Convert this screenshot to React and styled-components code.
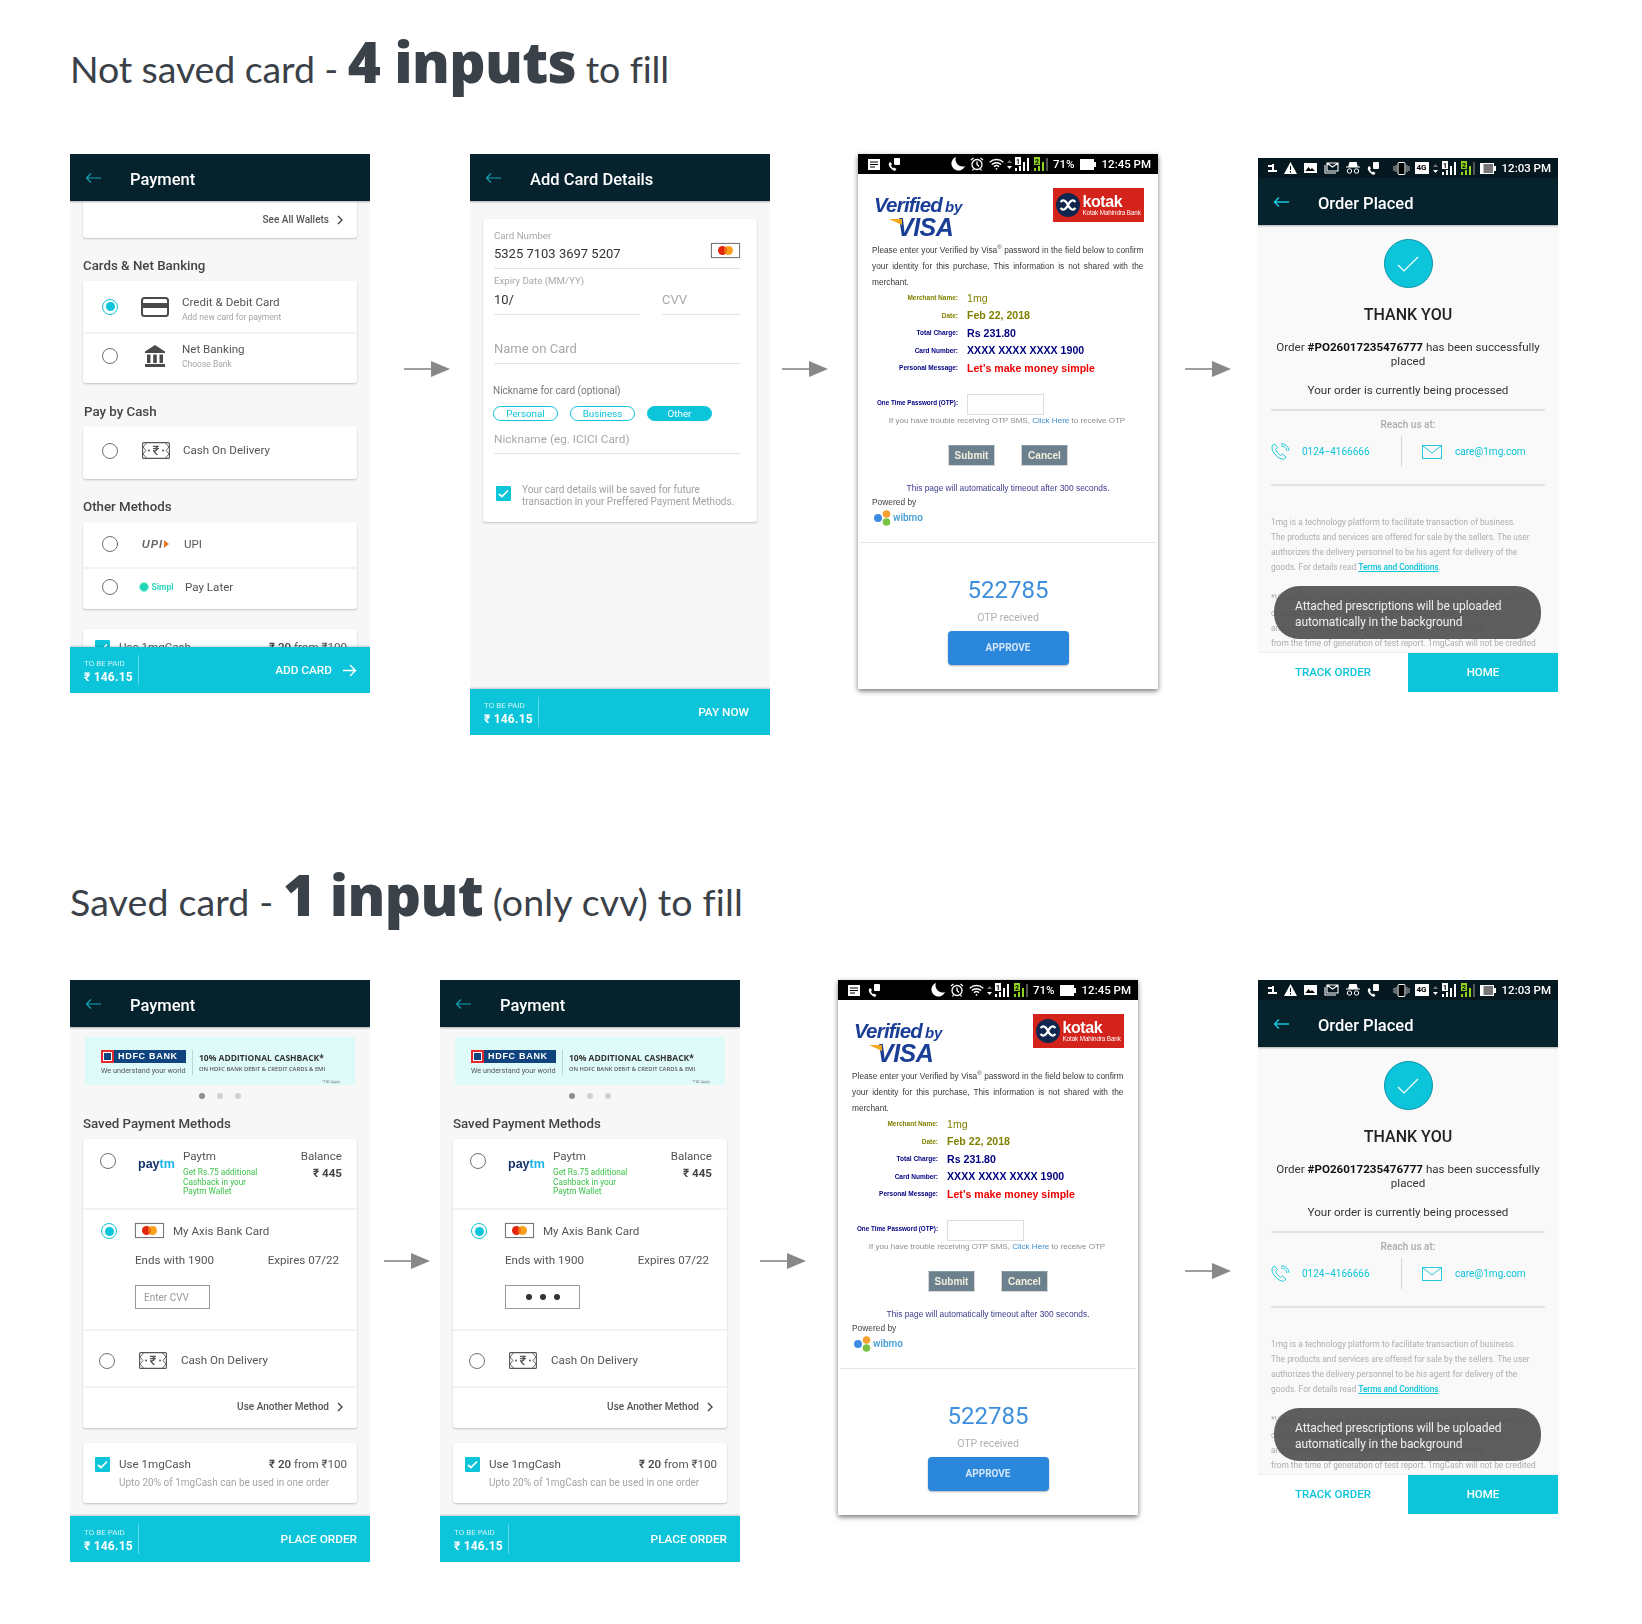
import React from "react";
import styled, { createGlobalStyle } from "styled-components";

const GlobalStyle = createGlobalStyle`
  html, body { margin: 0; padding: 0; background: #fff; }
  body { font-family: Roboto, "Liberation Sans", sans-serif; color: #444; }
`;

const CYAN = "#0cc5da";
const DARK = "#05222d";

const Page = styled.div`
  width: 1642px;
  height: 1624px;
  overflow: hidden;
  padding-left: 70px;
  box-sizing: border-box;
`;
const Section = styled.section`
  height: ${(p) => p.$h}px;
`;
const Heading = styled.h1`
  height: 154px;
  box-sizing: border-box;
  margin: 0;
  padding-top: ${(p) => p.$pt}px;
  font-family: Lato, "Open Sans", sans-serif;
  font-weight: 400;
  font-size: 37.5px;
  line-height: 60px;
  letter-spacing: ${(p) => p.$ls}px;
  color: #3a4148;
  white-space: nowrap;
  b {
    font-family: "Open Sans", sans-serif;
    font-weight: 800;
    font-size: 56.5px;
    letter-spacing: -0.6px;
  }
`;
const Row = styled.div`
  display: flex;
  align-items: flex-start;
`;
const FlowArrow = styled.svg`
  flex: none;
  width: 46px;
  height: 16px;
  margin: ${(p) => p.$mt}px ${(p) => p.$mr}px 0 ${(p) => p.$ml}px;
`;
const Screen = styled.div`
  position: relative;
  flex: none;
  width: 300px;
  height: ${(p) => p.$h}px;
  margin-top: ${(p) => p.$mt || 0}px;
  display: flex;
  flex-direction: column;
  overflow: hidden;
  background: ${(p) => p.$bg || "#f7f7f7"};
  filter: blur(0.35px);
`;
const BankScreen = styled(Screen)`
  overflow: visible;
  box-shadow: 0 2px 5px rgba(0, 0, 0, 0.55);
  font-family: "Liberation Sans", Arial, sans-serif;
`;

/* top bar */
const Bar = styled.header`
  flex: none;
  height: 47px;
  background: ${DARK};
  display: flex;
  align-items: center;
  padding-left: 15px;
  box-sizing: border-box;
  box-shadow: 0 1px 2px rgba(0, 0, 0, 0.3);
  position: relative;
  z-index: 1;
`;
const BarTitle = styled.div`
  margin: 4px 0 0 28px;
  color: #fff;
  font-size: 16.5px;
  font-weight: 500;
`;
const BackArrow = ({ bright }) => (
  <svg width="17" height="12" viewBox="0 0 17 12" fill="none" stroke={bright ? "#17c6dc" : "#12a5b5"} strokeWidth={bright ? 1.5 : 1.1}>
    <path d="M16 6H1.5M6 1.5 1.5 6 6 10.5" />
  </svg>
);
const AppBar = ({ title, bright }) => (
  <Bar>
    <BackArrow bright={bright} />
    <BarTitle>{title}</BarTitle>
  </Bar>
);

/* bottom bar */
const Footer = styled.footer`
  flex: none;
  height: 46px;
  background: ${CYAN};
  color: #fff;
  display: flex;
  align-items: center;
  justify-content: space-between;
  padding: 0 13px 0 14px;
  box-sizing: border-box;
  box-shadow: 0 -1px 2px rgba(0, 0, 0, 0.2);
  position: relative;
  z-index: 1;
`;
const Total = styled.div`
  width: 55px;
  box-sizing: border-box;
  padding-top: 3px;
  height: 30px;
  border-right: 1px solid rgba(255, 255, 255, 0.35);
`;
const TotalLabel = styled.div`
  font-size: 8px;
  line-height: 11px;
  color: rgba(255, 255, 255, 0.8);
  white-space: nowrap;
`;
const TotalValue = styled.div`
  font-size: 12px;
  line-height: 17px;
  font-weight: 700;
  white-space: nowrap;
  letter-spacing: 0.2px;
`;
const FooterAction = styled.div`
  display: flex;
  align-items: center;
  gap: 10px;
  font-size: 11.8px;
  font-weight: 500;
  padding-right: ${(p) => p.$pr || 0}px;
`;
const PayFooter = ({ action, arrow, pr }) => (
  <Footer>
    <Total>
      <TotalLabel>TO BE PAID</TotalLabel>
      <TotalValue>₹ 146.15</TotalValue>
    </Total>
    <FooterAction $pr={pr}>
      {action}
      {arrow && (
        <svg width="15" height="13" viewBox="0 0 15 13" fill="none" stroke="#fff" strokeWidth="1.4">
          <path d="M1 6.5h12.5M8 1l5.5 5.5L8 12" />
        </svg>
      )}
    </FooterAction>
  </Footer>
);

/* shared payment parts */
const Body = styled.div`
  flex: 1;
  min-height: 0;
  overflow: hidden;
  padding: 0 13px;
`;
const Card = styled.div`
  background: #fff;
  border-radius: ${(p) => (p.$flat ? "0 0 3px 3px" : "3px")};
  box-shadow: 0 1px 2px rgba(0, 0, 0, 0.22);
  margin-top: ${(p) => p.$mt || 0}px;
`;
const SectionTitle = styled.div`
  margin: ${(p) => p.$mt || 20}px 0 ${(p) => p.$mb || 7}px ${(p) => p.$ml || 0}px;
  font-size: 13.3px;
  line-height: 16px;
  font-weight: 500;
  color: #444;
`;
const OptRow = styled.div`
  display: flex;
  align-items: center;
  height: ${(p) => p.$h}px;
  padding-left: 19px;
  padding-bottom: ${(p) => p.$pb || 0}px;
  box-sizing: border-box;
  & + & {
    border-top: 2px solid #f3f3f3;
  }
`;
const CodRow = styled(OptRow)`
  padding: 4px 0 0 16px;
  border-top: 2px solid #f3f3f3;
`;
const Radio = styled.span`
  flex: none;
  width: 16px;
  height: 16px;
  box-sizing: border-box;
  border-radius: 50%;
  border: 1.5px solid ${(p) => (p.$on ? CYAN : "#707070")};
  background: #fff;
  display: flex;
  align-items: center;
  justify-content: center;
  margin-top: ${(p) => p.$mt || 0}px;
  margin-left: ${(p) => p.$ml || 0}px;
  &::after {
    content: "";
    display: ${(p) => (p.$on ? "block" : "none")};
    width: 9px;
    height: 9px;
    border-radius: 50%;
    background: ${CYAN};
  }
`;
const IconSlot = styled.span`
  flex: none;
  width: ${(p) => p.$w || 64}px;
  padding-left: ${(p) => p.$pl ?? 9}px;
  box-sizing: border-box;
  display: flex;
  justify-content: center;
  align-items: center;
`;
const OptText = styled.div`
  margin-top: ${(p) => p.$mt || 0}px;
`;
const OptTitle = styled.div`
  font-size: 11.6px;
  line-height: 15px;
  color: #555;
`;
const OptSub = styled.div`
  font-size: 8.5px;
  line-height: 14px;
  color: #a5a5a5;
`;
const LinkRow = styled.div`
  display: flex;
  justify-content: flex-end;
  align-items: center;
  gap: 8px;
  height: ${(p) => p.$h}px;
  padding: 0 14px ${(p) => p.$pb || 0}px 0;
  font-size: 10px;
  font-weight: 500;
  color: #555;
  box-sizing: border-box;
  border-top: ${(p) => (p.$line ? "2px solid #f3f3f3" : "none")};
`;
const Chevron = () => (
  <svg width="6" height="10" viewBox="0 0 6 10" fill="none" stroke="#444" strokeWidth="1.4">
    <path d="M1 1l4 4-4 4" />
  </svg>
);

const CardGlyph = () => (
  <svg width="28" height="20" viewBox="0 0 28 20" fill="none">
    <rect x="1" y="1" width="26" height="18" rx="2.5" stroke="#4a4a4a" strokeWidth="2" />
    <rect x="1" y="6" width="26" height="5" fill="#4a4a4a" />
  </svg>
);
const BankGlyph = () => (
  <svg width="22" height="22" viewBox="0 0 22 22" fill="#4a4a4a">
    <path d="M11 0 21 6.500V8H1V6.500zM3 9.500h3.500V18H3zM9.200 9.500h3.600V18H9.200zM15.500 9.500H19V18h-3.500zM1 19h20v3H1z" />
  </svg>
);
const CashGlyph = () => (
  <svg width="28" height="17" viewBox="0 0 28 17" fill="none">
    <rect x="0.6" y="0.6" width="26.8" height="15.8" rx="1" stroke="#555" strokeWidth="1.1" />
    <path d="M1 5l3.500-4M27 5l-3.500-4M1 12l3.500 4M27 12l-3.500 4M1 5l3 3.500-3 3.500M27 5l-3 3.500 3 3.500" stroke="#555" strokeWidth="0.9" />
    <circle cx="7" cy="8.5" r="1" fill="#555" />
    <circle cx="21" cy="8.5" r="1" fill="#555" />
    <text x="14" y="13" textAnchor="middle" fontSize="13" fontFamily="Roboto, 'DejaVu Sans'" fontWeight="500" fill="#555">₹</text>
  </svg>
);
const UpiText = styled.span`
  font: italic 700 11px "Liberation Sans", sans-serif;
  letter-spacing: 1px;
  color: #666;
  display: inline-flex;
  align-items: center;
  gap: 1px;
  &::after {
    content: "";
    width: 0;
    height: 0;
    border-left: 5px solid #e8792b;
    border-top: 4px solid transparent;
    border-bottom: 4px solid transparent;
  }
`;
const SimplMark = styled.span`
  display: inline-flex;
  align-items: center;
  gap: 3px;
  font-size: 8.5px;
  font-weight: 700;
  color: #2fd6bd;
  &::before {
    content: "";
    width: 10px;
    height: 10px;
    border-radius: 50%;
    background: #22d5b6;
    border: 1px solid #9cefe0;
    box-sizing: border-box;
  }
`;
const MasterBox = styled.span`
  flex: none;
  width: 29px;
  height: 15px;
  box-sizing: border-box;
  background: #fff;
  border: 1px solid #777;
  box-shadow: 0 0 1px rgba(0, 0, 0, 0.3);
  display: flex;
  align-items: center;
  justify-content: center;
  svg { display: block; }
`;
const MasterCard = () => (
  <MasterBox>
    <svg width="15" height="9" viewBox="0 0 15 9">
      <circle cx="4.5" cy="4.5" r="4.5" fill="#e2270e" />
      <circle cx="10.5" cy="4.5" r="4.5" fill="#f9a11b" />
      <path d="M7.5 1.1a4.5 4.5 0 0 1 0 6.8 4.5 4.5 0 0 1 0-6.8z" fill="#f26a12" />
    </svg>
  </MasterBox>
);
const CheckBox = styled.span`
  flex: none;
  width: 15px;
  height: 15px;
  border-radius: 1px;
  background: ${CYAN};
  display: flex;
  align-items: center;
  justify-content: center;
`;
const Check = () => (
  <CheckBox>
    <svg width="11" height="9" viewBox="0 0 11 9" fill="none" stroke="#fff" strokeWidth="1.7">
      <path d="M1 5l3 2.500L10 1.500" />
    </svg>
  </CheckBox>
);

const CashRow = styled.div`
  display: flex;
  gap: 9px;
  padding: ${(p) => p.$pt || 9}px 10px ${(p) => p.$pb || 0}px 12px;
`;
const CashText = styled.div`
  flex: 1;
`;
const CashLine = styled.div`
  display: flex;
  justify-content: space-between;
  align-items: center;
`;
const CashAmount = styled.span`
  font-size: 11.600px;
  margin-top: -2px;
  color: #555;
  b { font-weight: 500; color: #444; }
`;
const CashSub = styled.div`
  margin-top: 4px;
  font-size: 10px;
  line-height: 14px;
  color: #a5a5a5;
  white-space: nowrap;
`;

/* first screen */
const WalletScreen = () => (
  <Screen $h={539}>
    <AppBar title="Payment" />
    <Body>
      <Card $flat>
        <LinkRow $h={37}>
          See All Wallets <Chevron />
        </LinkRow>
      </Card>
      <SectionTitle>Cards &amp; Net Banking</SectionTitle>
      <Card>
        <OptRow $h={51}>
          <Radio $on />
          <IconSlot><CardGlyph /></IconSlot>
          <OptText $mt={5}>
            <OptTitle>Credit &amp; Debit Card</OptTitle>
            <OptSub>Add new card for payment</OptSub>
          </OptText>
        </OptRow>
        <OptRow $h={51} $pb={5}>
          <Radio />
          <IconSlot><BankGlyph /></IconSlot>
          <OptText>
            <OptTitle>Net Banking</OptTitle>
            <OptSub>Choose Bank</OptSub>
          </OptText>
        </OptRow>
      </Card>
      <SectionTitle $mt={21} $mb={6} $ml={1}>Pay by Cash</SectionTitle>
      <Card>
        <OptRow $h={53} $pb={4}>
          <Radio />
          <IconSlot $w={65} $pl={11}><CashGlyph /></IconSlot>
          <OptTitle>Cash On Delivery</OptTitle>
        </OptRow>
      </Card>
      <SectionTitle $mt={20}>Other Methods</SectionTitle>
      <Card>
        <OptRow $h={45} $pb={1}>
          <Radio />
          <IconSlot $w={66}><UpiText>UPI</UpiText></IconSlot>
          <OptTitle>UPI</OptTitle>
        </OptRow>
        <OptRow $h={42} $pb={4}>
          <Radio />
          <IconSlot $w={67}><SimplMark>Simpl</SimplMark></IconSlot>
          <OptTitle>Pay Later</OptTitle>
        </OptRow>
      </Card>
      <Card $mt={20}>
        <CashRow $pt={11}>
          <Check />
          <CashText>
            <CashLine>
              <OptTitle>Use 1mgCash</OptTitle>
              <CashAmount><b>₹ 20</b> from ₹100</CashAmount>
            </CashLine>
          </CashText>
        </CashRow>
      </Card>
    </Body>
    <PayFooter action="ADD CARD" arrow />
  </Screen>
);

/* add card screen */
const FormCard = styled(Card)`
  margin-top: 18px;
  height: 303px;
  padding: 0 16px 0 11px;
`;
const Field = styled.div`
  position: relative;
  width: ${(p) => (p.$w ? p.$w + "px" : "auto")};
  padding: ${(p) => p.$pt || 6}px 0 ${(p) => p.$pb || 6}px;
  margin-top: ${(p) => p.$mt || 0}px;
  border-bottom: 1px solid #e4e4e4;
`;
const FieldRow = styled.div`
  display: flex;
  justify-content: space-between;
  align-items: flex-end;
`;
const FieldLabel = styled.div`
  font-size: 9.700px;
  line-height: 12px;
  margin-bottom: ${(p) => p.$mb || 4}px;
  color: #a8a8a8;
`;
const FieldValue = styled.div`
  font-size: ${(p) => p.$fs || 13}px;
  line-height: 16px;
  color: ${(p) => (p.$ph ? "#a8a8a8" : "#333")};
`;
const FieldIcon = styled.div`
  position: absolute;
  right: 1px;
  top: 24px;
`;
const NickLabel = styled.div`
  margin: 21px 0 9px -1px;
  font-size: 10px;
  line-height: 12px;
  color: #777;
`;
const Chips = styled.div`
  display: flex;
  gap: 12px;
  margin-left: -1px;
`;
const Chip = styled.span`
  width: 65px;
  height: 15px;
  box-sizing: border-box;
  border-radius: 8px;
  border: 1px solid ${CYAN};
  background: ${(p) => (p.$on ? CYAN : "#fff")};
  color: ${(p) => (p.$on ? "#fff" : CYAN)};
  font-size: 9.800px;
  line-height: 13px;
  text-align: center;
`;
const SaveRow = styled.div`
  display: flex;
  gap: 11px;
  margin: 30px 0 0 2px;
  font-size: 10px;
  line-height: 12px;
  color: #a0a0a0;
  white-space: nowrap;
  ${CheckBox} { margin-top: 2px; }
`;
const AddCardScreen = () => (
  <Screen $h={581}>
    <AppBar title="Add Card Details" />
    <Body>
      <FormCard>
        <Field $pt={11}>
          <FieldLabel>Card Number</FieldLabel>
          <FieldValue>5325 7103 3697 5207</FieldValue>
          <FieldIcon><MasterCard /></FieldIcon>
        </Field>
        <FieldRow>
          <Field $w={147}>
            <FieldLabel $mb={5}>Expiry Date (MM/YY)</FieldLabel>
            <FieldValue>10/</FieldValue>
          </Field>
          <Field $w={79}>
            <FieldValue $ph>CVV</FieldValue>
          </Field>
        </FieldRow>
        <Field $pt={1} $pb={6} $mt={25}>
          <FieldValue $ph>Name on Card</FieldValue>
        </Field>
        <NickLabel>Nickname for card (optional)</NickLabel>
        <Chips>
          <Chip>Personal</Chip>
          <Chip>Business</Chip>
          <Chip $on>Other</Chip>
        </Chips>
        <Field $pt={1} $pb={6} $mt={9}>
          <FieldValue $ph $fs={11.8}>Nickname (eg. ICICI Card)</FieldValue>
        </Field>
        <SaveRow>
          <Check />
          <div>
            Your card details will be saved for future<br />
            transaction in your Preffered Payment Methods.
          </div>
        </SaveRow>
      </FormCard>
    </Body>
    <PayFooter action="PAY NOW" pr={8} />
  </Screen>
);

/* status bar */
const Status = styled.div`
  flex: none;
  height: 20px;
  box-sizing: border-box;
  padding: 0 7px 0 10px;
  background: ${(p) => p.$bg};
  display: flex;
  align-items: center;
  justify-content: space-between;
  color: #fff;
  font: 500 11.5px Roboto, sans-serif;
  white-space: nowrap;
  position: relative;
  z-index: 2;
`;
const StatusGroup = styled.div`
  display: flex;
  align-items: center;
  gap: ${(p) => p.$gap}px;
  svg { display: block; }
`;
const Clock = styled.span`
  margin-left: ${(p) => p.$ml || 0}px;
`;
const Note = () => (
  <svg width="12" height="11" viewBox="0 0 12 11"><path d="M0 0h12v11H0z" fill="#fff" /><path d="M2 3h8M2 5.500h8M2 8h5" stroke="#000" /></svg>
);
const CallLock = () => (
  <svg width="12" height="13" viewBox="0 0 12 13" fill="#fff">
    <path d="M1 5q-1 2 1 4.500t5 3.500l1.500-2-2.500-1.500-1 .8q-1.500-1-2-3l1-1L2.500 4z" />
    <rect x="6" y="0" width="6" height="7" rx="1" />
  </svg>
);
const Moon = () => (
  <svg width="14" height="14" viewBox="0 0 14 14"><path d="M5 0a7 7 0 1 0 9 9A7 7 0 0 1 5 0z" fill="#fff" /></svg>
);
const Alarm = () => (
  <svg width="14" height="14" viewBox="0 0 14 14" fill="none" stroke="#fff" strokeWidth="1.3">
    <circle cx="7" cy="7.500" r="5" /><path d="M7 4.500v3l2 2M1 3l2.500-2M13 3l-2.500-2M3.500 12l-1 1.500M10.500 12l1 1.500" />
  </svg>
);
const Wifi = () => (
  <svg width="15" height="12" viewBox="0 0 15 12" fill="none" stroke="#fff" strokeWidth="1.4">
    <path d="M.7 4.200a10 10 0 0 1 13.600 0M2.800 6.500a7 7 0 0 1 9.400 0M5 8.700a3.600 3.600 0 0 1 5 0" /><circle cx="7.500" cy="10.800" r=".9" fill="#fff" stroke="none" />
  </svg>
);
const UpDownBox = styled.span`
  margin: 0 ${(p) => p.$m ?? 0}px;
`;
const UpDown = ({ m }) => (
  <UpDownBox $m={m}>
    <svg width="5" height="11" viewBox="0 0 5 11"><path d="M2.500 1 5 4H0z" fill="#777" /><path d="M2.500 10 5 7H0z" fill="#fff" /></svg>
  </UpDownBox>
);
const Signal = ({ n, green }) => {
  const c = green ? "#8fd31f" : "#fff";
  return (
    <svg width="14" height="14" viewBox="0 0 14 14">
      <rect x="0" y="0" width="6" height="8" fill={c} />
      <text x="3" y="7" textAnchor="middle" fontSize="7" fontWeight="700" fontFamily="Roboto" fill="#000">{n}</text>
      <rect x="0" y="11" width="2" height="3" fill={c} />
      <rect x="4" y="9" width="2" height="5" fill={c} />
      <rect x="8" y="5" width="2" height="9" fill={c} />
      <rect x="12" y="1" width="2" height="13" fill={green ? "#555" : c} />
    </svg>
  );
};
const Battery = ({ level = 1 }) => (
  <svg width="16" height="11" viewBox="0 0 16 11">
    <rect x="0" y="0" width="14" height="11" fill="#fff" />
    <rect x={14 * level} y="1" width={14 * (1 - level) - 1} height="9" fill="#777" />
    <rect x="14" y="3" width="2" height="5" fill="#fff" />
  </svg>
);
const Sim = () => (
  <svg width="9" height="8" viewBox="0 0 9 8"><path d="M0 1h4V0h2v6h3v2H0V6h4V3H0z" fill="#fff" /></svg>
);
const Warn = () => (
  <svg width="13" height="12" viewBox="0 0 13 12"><path d="M6.500 0 13 12H0z" fill="#fff" /><path d="M6.500 4v4M6.500 9v1.500" stroke="#000" /></svg>
);
const Photo = () => (
  <svg width="13" height="10" viewBox="0 0 13 10"><path d="M0 0h13v10H0z" fill="#fff" /><path d="M1.500 8l3-4 2 2.500 1.500-1.500 3 3z" fill="#000" /></svg>
);
const Mail = () => (
  <svg width="15" height="12" viewBox="0 0 15 12" fill="none" stroke="#fff" strokeWidth="1.1">
    <path d="M3 1h11v8H3zM3 1l5.500 4L14 1M1 3v8h11" />
  </svg>
);
const Spy = () => (
  <svg width="14" height="12" viewBox="0 0 14 12" fill="none" stroke="#fff">
    <path d="M3 4 4 0h6l1 4zM0 5h14" strokeWidth="1.200" fill="#fff" />
    <circle cx="3.500" cy="9" r="2.200" /><circle cx="10.500" cy="9" r="2.200" />
  </svg>
);
const Vibrate = () => (
  <svg width="17" height="13" viewBox="0 0 17 13" fill="none" stroke="#bbb">
    <rect x="5" y="0.500" width="7" height="12" rx="1" fill="#000" stroke="#fff" />
    <path d="M3 3v7M1 4v5M14 3v7M16 4v5" />
  </svg>
);
const Lte = styled.span`
  width: 14px;
  height: 12px;
  background: #fff;
  color: #000;
  font: 700 8px/12px Roboto, sans-serif;
  text-align: center;
`;

/* bank otp screen */
const BankHead = styled.div`
  height: 68px;
  display: flex;
  justify-content: space-between;
  padding: 14px 14.5px 0 16px;
  box-sizing: border-box;
`;
const VisaMark = styled.div`
  margin-top: 6px;
  font-style: italic;
  font-weight: 700;
  color: #1a3e96;
  font-size: 20.500px;
  line-height: 21px;
  letter-spacing: -0.8px;
  small {
    font-size: 15px;
    letter-spacing: -0.3px;
    margin-left: 3px;
  }
`;
const VisaWord = styled.div`
  position: relative;
  margin-left: 23px;
  font-size: 25px;
  line-height: 21px;
  letter-spacing: -0.5px;
  &::before {
    content: "";
    position: absolute;
    left: -8px;
    top: 2px;
    width: 13px;
    height: 6px;
    background: #f2a81d;
    clip-path: polygon(0 0, 100% 0, 100% 100%);
  }
`;
const KotakBox = styled.div`
  width: 91px;
  height: 34px;
  background: #d3231b;
  display: flex;
  align-items: center;
  gap: 3px;
  padding-left: 3px;
  box-sizing: border-box;
  color: #fff;
`;
const KotakText = styled.div`
  font-size: 16px;
  font-weight: 700;
  line-height: 15px;
  letter-spacing: -0.4px;
  small {
    display: block;
    font-size: 6.300px;
    font-weight: 400;
    line-height: 8px;
    letter-spacing: -0.1px;
    white-space: nowrap;
  }
`;
const KotakRing = () => (
  <svg width="24" height="24" viewBox="0 0 26 26" fill="none">
    <circle cx="13" cy="13" r="13" fill="#10264f" />
    <path d="M5 16c2 3 5 3 8-3s6-6 8-3M5 10c2-3 5-3 8 3s6 6 8 3" stroke="#fff" strokeWidth="2.400" />
  </svg>
);
const BankCopy = styled.p`
  margin: 0;
  padding: 0 14.5px 0 14px;
  font-size: 8.300px;
  line-height: 16px;
  color: #3a3a3a;
  text-align: justify;
  sup { font-size: 6px; line-height: 0; }
`;
const Details = styled.div`
  display: grid;
  grid-template-columns: 86px auto;
  column-gap: 9px;
  grid-auto-rows: 17.500px;
  align-items: center;
  padding-left: 14px;
  margin-top: -1px;
`;
const DetailLabel = styled.div`
  font-size: 6.500px;
  font-weight: 700;
  text-align: right;
  white-space: nowrap;
  color: ${(p) => p.$c};
`;
const DetailValue = styled.div`
  font-size: 10.600px;
  font-weight: ${(p) => (p.$light ? 400 : 700)};
  white-space: nowrap;
  color: ${(p) => p.$c};
`;
const OtpRow = styled.div`
  display: flex;
  align-items: center;
  padding-left: 14px;
  margin-top: 17px;
  gap: 9px;
`;
const OtpLabel = styled(DetailLabel)`
  width: 86px;
  margin-top: -3px;
  font-size: 6.300px;
`;
const OtpBox = styled.div`
  width: 77px;
  height: 21px;
  box-sizing: border-box;
  border: 1px solid #ddd;
  background: #fff;
`;
const OtpHint = styled.div`
  font-size: 8.050px;
  line-height: 11px;
  color: #8d8d8d;
  text-align: center;
  padding-right: 2px;
  span { color: #3b8ed0; }
`;
const BankButtons = styled.div`
  display: flex;
  justify-content: center;
  gap: 26px;
  margin-top: 19px;
`;
const BankButton = styled.div`
  width: 47px;
  height: 21px;
  box-sizing: border-box;
  background: #6c808e;
  border: 1px solid #d5d5d5;
  border-top-color: #8a9aa5;
  color: #f2efdd;
  font-size: 10px;
  font-weight: 700;
  line-height: 19px;
  text-align: center;
`;
const Timeout = styled.div`
  margin-top: 16px;
  font-size: 8.400px;
  line-height: 12px;
  color: #3b3b8c;
  text-align: center;
`;
const Powered = styled.div`
  margin-top: 2px;
  padding-left: 14px;
  font-size: 8.400px;
  line-height: 12px;
  color: #444;
`;
const Wibmo = styled.div`
  display: flex;
  align-items: center;
  gap: 2px;
  height: 16px;
  margin-top: 2px;
  padding-left: 16px;
  font: 500 10px Roboto, sans-serif;
  color: #3f9ad6;
`;
const Divider = styled.div`
  height: 1px;
  margin: ${(p) => p.$mt}px 2px 0;
  background: #e6e6e6;
`;
const OtpCode = styled.div`
  margin-top: 33px;
  font: 400 24px/28px Roboto, sans-serif;
  color: #3d8fdc;
  text-align: center;
`;
const OtpNote = styled.div`
  margin-top: 7px;
  font: 400 10.500px/14px Roboto, sans-serif;
  color: #b0b0b0;
  text-align: center;
`;
const Approve = styled.div`
  width: 121px;
  height: 34px;
  margin: 6px auto 0;
  border-radius: 4px;
  background: #2b87dc;
  box-shadow: 0 1px 2px rgba(0, 0, 0, 0.3);
  font: 700 10px/34px Roboto, sans-serif;
  color: #d3e6f7;
  text-align: center;
`;
const BankOtpScreen = () => (
  <BankScreen $h={535} $bg="#fff">
    <Status $bg="#000">
      <StatusGroup $gap={8}><Note /><CallLock /></StatusGroup>
      <StatusGroup $gap={5}>
        <Moon /><Alarm /><Wifi /><UpDown m={-2} /><Signal n="1" /><Signal n="2" green />
        <span>71%</span><Battery /><Clock $ml={1}>12:45 PM</Clock>
      </StatusGroup>
    </Status>
    <BankHead>
      <VisaMark>
        Verified<small>by</small>
        <VisaWord>VISA</VisaWord>
      </VisaMark>
      <KotakBox>
        <KotakRing />
        <KotakText>kotak<small>Kotak Mahindra Bank</small></KotakText>
      </KotakBox>
    </BankHead>
    <BankCopy>
      Please enter your Verified by Visa<sup>®</sup> password in the field below to confirm your identity for this purchase, This information is not shared with the merchant.
    </BankCopy>
    <Details>
      <DetailLabel $c="#808000">Merchant Name:</DetailLabel><DetailValue $c="#808000" $light>1mg</DetailValue>
      <DetailLabel $c="#808000">Date:</DetailLabel><DetailValue $c="#808000">Feb 22, 2018</DetailValue>
      <DetailLabel $c="#000080">Total Charge:</DetailLabel><DetailValue $c="#000080">Rs 231.80</DetailValue>
      <DetailLabel $c="#000080">Card Number:</DetailLabel><DetailValue $c="#000080">XXXX XXXX XXXX 1900</DetailValue>
      <DetailLabel $c="#000080">Personal Message:</DetailLabel><DetailValue $c="#f00000">Let's make money simple</DetailValue>
    </Details>
    <OtpRow>
      <OtpLabel $c="#000080">One Time Password (OTP):</OtpLabel>
      <OtpBox />
    </OtpRow>
    <OtpHint>If you have trouble receiving OTP SMS, <span>Click Here</span> to receive OTP</OtpHint>
    <BankButtons>
      <BankButton>Submit</BankButton>
      <BankButton>Cancel</BankButton>
    </BankButtons>
    <Timeout>This page will automatically timeout after 300 seconds.</Timeout>
    <Powered>Powered by</Powered>
    <Wibmo>
      <svg width="17" height="16" viewBox="0 0 17 16">
        <circle cx="4" cy="8" r="4" fill="#3d8ce0" />
        <circle cx="12.500" cy="4" r="3.800" fill="#f5a030" />
        <circle cx="12.500" cy="12" r="3.800" fill="#7cc242" />
      </svg>
      wibmo
    </Wibmo>
    <Divider $mt={16} />
    <OtpCode>522785</OtpCode>
    <OtpNote>OTP received</OtpNote>
    <Approve>APPROVE</Approve>
  </BankScreen>
);

/* order placed */
const OrderBody = styled.div`
  flex: 1;
  min-height: 0;
  overflow: hidden;
  padding: 14px 13px 0;
  text-align: center;
`;
const Tick = styled.div`
  width: 49px;
  height: 49px;
  margin: 0 auto;
  box-sizing: border-box;
  border-radius: 50%;
  background: ${CYAN};
  border: 1px solid #0a93a5;
  display: flex;
  align-items: center;
  justify-content: center;
`;
const Thanks = styled.div`
  margin-top: 17px;
  font-size: 16px;
  font-weight: 500;
  line-height: 20px;
  color: #222;
`;
const OrderLine = styled.div`
  margin-top: ${(p) => p.$mt}px;
  font-size: 11.600px;
  line-height: 14px;
  color: #333;
  b { color: #111; }
`;
const Rule = styled.div`
  height: 2px;
  margin-top: ${(p) => p.$mt}px;
  background: #e2e2e2;
`;
const ReachLabel = styled.div`
  margin-top: 8px;
  font-size: 10px;
  line-height: 12px;
  font-weight: 500;
  color: #ababab;
`;
const Contact = styled.div`
  display: flex;
  align-items: center;
  height: 31px;
  margin-top: 5px;
  font-size: 10px;
  color: ${CYAN};
  text-align: left;
`;
const ContactCell = styled.div`
  display: flex;
  align-items: center;
  width: ${(p) => p.$w}px;
  padding-left: ${(p) => p.$pl || 0}px;
  height: 100%;
  gap: ${(p) => p.$gap}px;
  border-right: ${(p) => (p.$line ? "1px solid #d5d5d5" : "none")};
  box-sizing: border-box;
`;
const Legal = styled.div`
  margin-top: ${(p) => p.$mt}px;
  font-size: 8.400px;
  line-height: 15px;
  color: #adadad;
  text-align: left;
  white-space: nowrap;
  a { color: ${CYAN}; font-weight: 500; text-decoration: underline; letter-spacing: -0.1px; }
`;
const Toast = styled.div`
  position: absolute;
  left: 16px;
  top: 428px;
  width: 267px;
  height: 53px;
  box-sizing: border-box;
  padding: 13px 0 0 21px;
  border-radius: 25px;
  background: rgba(82, 82, 82, 0.93);
  color: #eee;
  font-size: 12px;
  line-height: 15.500px;
  letter-spacing: -0.1px;
  white-space: nowrap;
`;
const OrderFooter = styled.div`
  flex: none;
  height: 40px;
  display: flex;
  background: #fff;
  border-top: 1px solid #eee;
  box-sizing: border-box;
`;
const OrderButton = styled.div`
  flex: 1;
  font-size: 11.500px;
  font-weight: 500;
  line-height: 39px;
  text-align: center;
  background: ${(p) => (p.$fill ? CYAN : "#fff")};
  color: ${(p) => (p.$fill ? "#fff" : CYAN)};
`;
const OrderScreen = ({ mt }) => (
  <Screen $h={534} $mt={mt} $bg="#f9f9f9">
    <Status $bg="#06181f">
      <StatusGroup $gap={7}><Sim /><Warn /><Photo /><Mail /><Spy /><CallLock /></StatusGroup>
      <StatusGroup $gap={5}>
        <Vibrate /><Lte>4G</Lte><UpDown m={-1} /><Signal n="1" /><Signal n="2" green />
        <Battery level={0.25} /><Clock $ml={1}>12:03 PM</Clock>
      </StatusGroup>
    </Status>
    <AppBar title="Order Placed" bright />
    <OrderBody>
      <Tick>
        <svg width="24" height="18" viewBox="0 0 24 18" fill="none" stroke="#fff" strokeWidth="1.200">
          <path d="M2 10l6 6L22 2" />
        </svg>
      </Tick>
      <Thanks>THANK YOU</Thanks>
      <OrderLine $mt={15}>
        Order <b>#PO26017235476777</b> has been successfully<br />placed
      </OrderLine>
      <OrderLine $mt={15}>Your order is currently being processed</OrderLine>
      <Rule $mt={12} />
      <ReachLabel>Reach us at:</ReachLabel>
      <Contact>
        <ContactCell $w={131} $gap={12} $line>
          <svg width="19" height="18" viewBox="0 0 19 18" fill="none" stroke={CYAN} strokeWidth="0.900">
            <path d="M1 3 3.500 1l3 3.500-2 2q1 3 5 6l2-1.500 3.500 3-2.500 2.500Q8 16 4 11.500T1 3zM10 3q5 0 6 5M10 .800q7 0 8 7" />
          </svg>
          0124−4166666
        </ContactCell>
        <ContactCell $w={143} $pl={20} $gap={13}>
          <svg width="20" height="14" viewBox="0 0 20 14" fill="none" stroke={CYAN} strokeWidth="0.900">
            <rect x="0.500" y="0.500" width="19" height="13" /><path d="M.5.5 10 8 19.500.5" />
          </svg>
          care@1mg.com
        </ContactCell>
      </Contact>
      <Rule $mt={17} />
      <Legal $mt={29}>
        1mg is a technology platform to facilitate transaction of business.<br />
        The products and services are offered for sale by the sellers. The user<br />
        authorizes the delivery personnel to be his agent for delivery of the<br />
        goods. For details read <a>Terms and Conditions</a>.
      </Legal>
      <Legal $mt={16}>
        *Value may change if the total order value changes. 1mgCash will be<br />
        credited always, 1mgCash will be credited in case of Products<br />
        and in case of Lab tests it will be credited within 24 hours<br />
        from the time of generation of test report. 1mgCash will not be credited
      </Legal>
    </OrderBody>
    <Toast>
      Attached prescriptions will be uploaded<br />
      automatically in the background
    </Toast>
    <OrderFooter>
      <OrderButton>TRACK ORDER</OrderButton>
      <OrderButton $fill>HOME</OrderButton>
    </OrderFooter>
  </Screen>
);

/* saved card payment */
const Banner = styled.div`
  margin: 10px 2px 0;
  height: 48px;
  background: #dffbf9;
  display: flex;
  align-items: center;
  padding: 3px 0 0 16px;
  box-sizing: border-box;
  position: relative;
`;
const HdfcCol = styled.div`
  width: 92px;
  padding-right: 6px;
  flex: none;
  border-right: 1px solid #b8d8d8;
  box-sizing: border-box;
`;
const HdfcLogo = styled.div`
  display: flex;
  align-items: center;
  height: 13px;
  background: #10447e;
  color: #fff;
  font: 700 9px/13px "Liberation Sans", sans-serif;
  letter-spacing: 0.7px;
  &::before {
    content: "";
    flex: none;
    width: 13px;
    height: 13px;
    margin-right: 4px;
    box-sizing: border-box;
    background: #10447e;
    border: 3px solid #fff;
    outline: 2px solid #e5282e;
    outline-offset: -2px;
  }
`;
const HdfcTag = styled.div`
  margin-top: 3px;
  font-size: 7.300px;
  line-height: 9px;
  color: #555;
  white-space: nowrap;
`;
const Offer = styled.div`
  padding-left: 6px;
  font: 700 8.500px/12px "Open Sans", sans-serif;
  color: #333;
  white-space: nowrap;
  small {
    display: block;
    font-size: 5.800px;
    font-weight: 600;
    line-height: 10px;
    color: #555;
  }
`;
const TermsTag = styled.span`
  position: absolute;
  right: 15px;
  bottom: 1px;
  font-size: 3.500px;
  color: #777;
`;
const Dots = styled.div`
  display: flex;
  justify-content: center;
  gap: 12px;
  margin-top: 8px;
`;
const Dot = styled.span`
  width: 6px;
  height: 6px;
  border-radius: 50%;
  background: ${(p) => (p.$on ? "#8d8d8d" : "#d0d0d0")};
`;
const SavedRow = styled.div`
  display: flex;
  align-items: flex-start;
  height: ${(p) => p.$h}px;
  padding: ${(p) => p.$pt}px 15px 0 17px;
  box-sizing: border-box;
  border-top: ${(p) => (p.$line ? "2px solid #f3f3f3" : "none")};
`;
const AxisSection = styled.div`
  height: 121px;
  padding-top: 13px;
  box-sizing: border-box;
  border-top: 2px solid #f3f3f3;
`;
const PaytmMark = styled.span`
  flex: none;
  width: 67px;
  margin-top: 9px;
  padding-left: 22px;
  box-sizing: border-box;
  font: 700 12.500px/12px "Liberation Sans", sans-serif;
  letter-spacing: 0;
  color: #16336e;
  i { font-style: normal; color: #1cb5ea; }
`;
const Grow = styled.div`
  flex: 1;
`;
const Promo = styled.div`
  margin-top: 4px;
  font-size: 8.300px;
  line-height: 9.500px;
  color: #3cc34a;
  white-space: nowrap;
`;
const Balance = styled.div`
  text-align: right;
  font-size: 11.600px;
  line-height: 15px;
  color: #555;
  b { display: block; margin-top: 2px; font-weight: 700; color: #444; }
`;
const AxisHead = styled.div`
  display: flex;
  align-items: center;
  gap: 9px;
  font-size: 11.600px;
  color: #555;
  margin-left: 18px;
`;
const AxisBody = styled.div`
  padding: 0 18px 0 52px;
`;
const AxisInfo = styled.div`
  display: flex;
  justify-content: space-between;
  margin-top: 14px;
  font-size: 11.600px;
  line-height: 14px;
  color: #555;
`;
const CvvBox = styled.div`
  display: flex;
  align-items: center;
  justify-content: ${(p) => (p.$dots ? "center" : "flex-start")};
  gap: 8px;
  width: 75px;
  height: 24px;
  box-sizing: border-box;
  margin-top: 18px;
  padding-left: ${(p) => (p.$dots ? 0 : 8)}px;
  border: 1px solid #999;
  border-bottom-width: 1.500px;
  background: #fff;
  font-size: 10px;
  color: #9a9a9a;
`;
const CvvDot = styled.span`
  width: 6px;
  height: 6px;
  border-radius: 50%;
  background: #333;
`;
const SavedScreen = ({ dots }) => (
  <Screen $h={582}>
    <AppBar title="Payment" />
    <Body>
      <Banner>
        <HdfcCol>
          <HdfcLogo>HDFC BANK</HdfcLogo>
          <HdfcTag>We understand your world</HdfcTag>
        </HdfcCol>
        <Offer>
          10% ADDITIONAL CASHBACK*
          <small>ON HDFC BANK DEBIT &amp; CREDIT CARDS &amp; EMI</small>
        </Offer>
        <TermsTag>*T&amp;C Apply</TermsTag>
      </Banner>
      <Dots>
        <Dot $on /><Dot /><Dot />
      </Dots>
      <SectionTitle $mt={17} $mb={7}>Saved Payment Methods</SectionTitle>
      <Card>
        <SavedRow $h={69} $pt={10}>
          <Radio $mt={4} />
          <PaytmMark>pay<i>tm</i></PaytmMark>
          <Grow>
            <OptTitle>Paytm</OptTitle>
            <Promo>Get Rs.75 additional<br />Cashback in your<br />Paytm Wallet</Promo>
          </Grow>
          <Balance>Balance<b>₹ 445</b></Balance>
        </SavedRow>
        <AxisSection>
          <SavedRow $h={16} $pt={0}>
            <Radio $on $ml={1} />
            <AxisHead><MasterCard />My Axis Bank Card</AxisHead>
          </SavedRow>
          <AxisBody>
            <AxisInfo><span>Ends with 1900</span><span>Expires 07/22</span></AxisInfo>
            <CvvBox $dots={dots}>
              {dots ? (<><CvvDot /><CvvDot /><CvvDot /></>) : "Enter CVV"}
            </CvvBox>
          </AxisBody>
        </AxisSection>
        <CodRow $h={57}>
          <Radio />
          <IconSlot $w={66} $pl={10}><CashGlyph /></IconSlot>
          <OptTitle>Cash On Delivery</OptTitle>
        </CodRow>
        <LinkRow $h={42} $line $pb={3}>
          Use Another Method <Chevron />
        </LinkRow>
      </Card>
      <Card $mt={15}>
        <CashRow $pt={14} $pb={13}>
          <Check />
          <CashText>
            <CashLine>
              <OptTitle>Use 1mgCash</OptTitle>
              <CashAmount><b>₹ 20</b> from ₹100</CashAmount>
            </CashLine>
            <CashSub>Upto 20% of 1mgCash can be used in one order</CashSub>
          </CashText>
        </CashRow>
      </Card>
    </Body>
    <PayFooter action="PLACE ORDER" />
  </Screen>
);

const Arrow = ({ ml, mr, mt }) => (
  <FlowArrow $ml={ml} $mr={mr} $mt={mt} viewBox="0 0 46 16">
    <path d="M0 7.200h28v1.600H0z" fill="#888" />
    <path d="M27 0l19 8-19 8z" fill="#888" />
  </FlowArrow>
);

export default function App() {
  return (
    <Page>
      <GlobalStyle />
      <Section $h={826}>
        <Heading $pt={32} $ls={-0.1}>Not saved card - <b>4 inputs</b> to fill</Heading>
        <Row>
          <WalletScreen />
          <Arrow ml={34} mr={20} mt={207} />
          <AddCardScreen />
          <Arrow ml={12} mr={30} mt={207} />
          <BankOtpScreen />
          <Arrow ml={27} mr={27} mt={207} />
          <OrderScreen mt={4} />
        </Row>
      </Section>
      <Section $h={798}>
        <Heading $pt={39} $ls={0.15}>Saved card - <b>1 input</b> (only cvv) to fill</Heading>
        <Row>
          <SavedScreen />
          <Arrow ml={14} mr={10} mt={273} />
          <SavedScreen dots />
          <Arrow ml={20} mr={32} mt={273} />
          <BankOtpScreen />
          <Arrow ml={47} mr={27} mt={283} />
          <OrderScreen />
        </Row>
      </Section>
    </Page>
  );
}
